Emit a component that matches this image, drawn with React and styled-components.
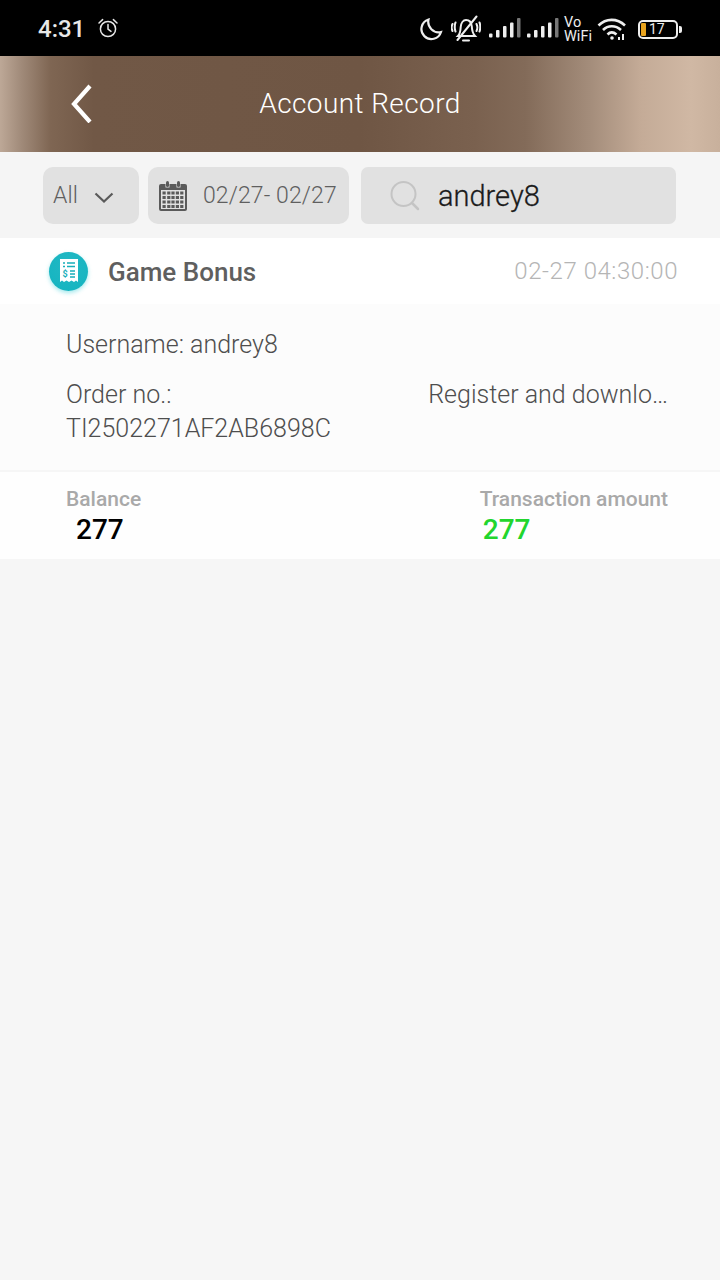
import React from 'react';
import styled, { createGlobalStyle } from 'styled-components';

const Global = createGlobalStyle`
  html, body { margin: 0; padding: 0; background: #f6f6f6; }
  body { font-family: Roboto, "Liberation Sans", sans-serif; }
`;
const Page = styled.div`
  width: 720px; height: 1280px; background: #f6f6f6; overflow: hidden;
  display: flex; flex-direction: column;
`;
const StatusBar = styled.div`
  height: 56px; flex: none; background: #000; color: #eee;
  display: flex; align-items: center; justify-content: space-between;
  padding: 2px 42px 0 38px; box-sizing: border-box;
`;
const StatusGroup = styled.div`
  display: flex; align-items: center; gap: ${p => p.$gap || 0}px;
`;
const Clock = styled.span`
  font-size: 24px; font-weight: 500; line-height: 28px; color: #e8e8e8;
`;
const StatusIcon = styled.svg`
  flex: none; margin-right: ${p => p.$mr || 0}px; margin-top: ${p => p.$mt || 0}px;
`;
const VoWifi = styled.div`
  font-weight: 400; color: #eee; margin: 1px 5px 0 0; width: 28px;
  font-size: 14.5px; line-height: 14px; text-align: left;
`;
const Battery = styled.div`
  width: 40px; height: 19px; border: 2px solid #eee; border-radius: 5px; box-sizing: border-box;
  display: flex; align-items: center; padding: 0 1px; gap: 3px; position: relative;
  &::after {
    content: ""; position: absolute; right: -6px; top: 4px; width: 3px; height: 7px; background: #eee; border-radius: 0 2px 2px 0;
  }
`;
const BatteryFill = styled.span`
  width: 5px; height: 13px; background: #e8a31e; border-radius: 1px; flex: none;
`;
const BatteryText = styled.span`
  font-size: 14px; line-height: 15px; font-weight: 400; color: #eee;
`;
const Header = styled.header`
  height: 96px; flex: none; position: relative;
  background: linear-gradient(90deg, #bda897 0%, #a08a79 3%, #7f6653 7%, #715846 13%, #6f5644 50%, #7a614f 66%, #836b59 73%, #a48d7b 82%, #c4ab97 89%, #d0b8a4 96%, #c8b09c 100%);
  display: flex; align-items: center; justify-content: center;
`;
const BackButton = styled.span`
  position: absolute; left: 68px; top: 27px; width: 28px; height: 40px; display: block;
`;
const Title = styled.h1`
  margin: 0; font-size: 28px; font-weight: 300; color: #fff; line-height: 40px; letter-spacing: 0.4px;
`;
const Filters = styled.div`
  height: 86px; flex: none; background: #f5f5f5; display: flex; gap: 9px;
  padding: 15px 44px 14px 43px; box-sizing: border-box;
`;
const Chip = styled.div`
  background: #e1e1e1; border-radius: ${p => p.$radius || 10}px; height: 57px; box-sizing: border-box;
  display: flex; align-items: center; flex: ${p => p.$grow ? '1' : 'none'};
  width: ${p => p.$width ? `${p.$width}px` : 'auto'};
  padding-left: ${p => p.$pad}px; gap: ${p => p.$gap}px; margin-left: ${p => p.$ml || 0}px;
`;
const ChipText = styled.span`
  font-size: 23px; font-weight: 300; color: #5f5f5f; letter-spacing: 0.1px; line-height: 30px;
`;
const SearchText = styled.span`
  font-size: 29px; color: #1b1b1b; line-height: 32px; font-weight: 300; -webkit-text-stroke: 0.3px #1b1b1b;
`;
const CardHead = styled.div`
  height: 66px; flex: none; background: #fff; display: flex; align-items: center; justify-content: space-between;
  padding: 0 42px 0 49px; box-sizing: border-box;
`;
const CardHeadLeft = styled.div`
  display: flex; align-items: center; gap: 20px;
`;
const Badge = styled.span`
  width: 39px; height: 39px; border-radius: 50%; display: flex; align-items: center; justify-content: center;
  background: radial-gradient(circle at 50% 35%, #22b8c4, #12b4c0);
  box-shadow: 0 2px 4px rgba(30, 200, 210, 0.4);
`;
const CardTitle = styled.span`
  font-size: 26px; font-weight: 500; color: #5f5f5f; line-height: 30px; margin-top: 2px;
`;
const CardTime = styled.span`
  font-size: 24px; font-weight: 300; color: #b5b5b5; letter-spacing: 0.55px; line-height: 30px; margin-top: -1px;
`;
const CardBody = styled.div`
  flex: none; height: 166px; background: #fcfcfc; padding: 24px 52px 0 66px; box-sizing: border-box;
  display: flex; flex-direction: column;
`;
const BodyLine = styled.div`
  font-size: 25px; font-weight: 300; color: #4e4e4e; line-height: 34px; height: 34px; white-space: nowrap;
`;
const OrderRow = styled.div`
  display: flex; justify-content: space-between; margin-top: 16px;
`;
const Divider = styled.div`
  height: 2px; flex: none; background: #f6f6f6;
`;
const Summary = styled.div`
  flex: none; height: 87px; background: #fefefe; display: flex; justify-content: space-between;
  padding: 15px 52px 0 66px; box-sizing: border-box;
`;
const Stat = styled.div`
  display: flex; flex-direction: column;
`;
const StatLabel = styled.span`
  font-size: 21px; font-weight: 500; color: #a9a9a9; line-height: 24px; white-space: nowrap;
`;
const StatValue = styled.span`
  font-size: 28px; font-weight: 500; color: ${p => p.$color}; line-height: 32px; padding-left: ${p => p.$indent}px; margin-top: 3px;
`;

const Calendar = () => (
  <svg width="28" height="30" viewBox="0 0 28 30">
    <path fill="#5a5a5a" d="M2 3h4.500v3.500h4V3h7v3.500h4V3H26a2 2 0 0 1 2 2v23a2 2 0 0 1-2 2H2a2 2 0 0 1-2-2V5a2 2 0 0 1 2-2z" />
    <rect x="7" y="0" width="3" height="6" rx="1.500" fill="#5a5a5a" />
    <rect x="18" y="0" width="3" height="6" rx="1.500" fill="#5a5a5a" />
    <rect x="2" y="9" width="24" height="19" fill="#e1e1e1" />
    {[10.5, 15, 19.5, 24].map(y =>
      [3.5, 8.2, 12.4, 16.8, 21.2].map(x => <rect key={`${x}-${y}`} x={x} y={y} width="3.2" height="3" fill="#5a5a5a" />)
    )}
  </svg>
);

const Signal = ({ mr }) => (
  <StatusIcon $mr={mr} width="32" height="22" viewBox="0 0 32 22">
    <rect x="0" y="15.500" width="3.500" height="4" rx="1" fill="#eee" />
    <rect x="7" y="12" width="3.500" height="7.500" rx="1" fill="#eee" />
    <rect x="14" y="8" width="3.500" height="11.500" rx="1" fill="#eee" />
    <rect x="21" y="4.500" width="3.500" height="15" rx="1" fill="#eee" />
    <rect x="28" y="0" width="3.500" height="19.500" rx="1" fill="#777" />
  </StatusIcon>
);

export default function App() {
  return (
    <Page>
      <Global />
      <StatusBar>
        <StatusGroup $gap={12}>
          <Clock>4:31</Clock>
          <StatusIcon $mt={-3} width="22" height="22" viewBox="0 0 22 22" fill="none" stroke="#e6e6e6" strokeWidth="1.500" strokeLinecap="round">
            <circle cx="11" cy="12" r="7.600" />
            <path d="M11 7.500V12.200l3 2.200M2 6l3.600-3.400M20 6l-3.600-3.400" />
          </StatusIcon>
        </StatusGroup>
        <StatusGroup>
          <StatusIcon $mr={8} width="24" height="24" viewBox="0 0 24 24" fill="none" stroke="#eee" strokeWidth="2.200">
            <path d="M9.500 2.500A10 10 0 1 0 22 15 A 10.500 10.500 0 0 1 9.500 2.500z" />
          </StatusIcon>
          <StatusIcon $mr={8} width="30" height="28" viewBox="0 0 30 28" fill="none" stroke="#eee" strokeWidth="2" strokeLinecap="round">
            <path d="M7 21c2-2 2.500-5 2.700-9 .3-4 2.500-7 5.300-7 3.500 0 5.500 3 5.800 6.500.2 3.500.8 7 3.200 9.500z" />
            <path d="M12 25.500h6M25.500 1.500 6.500 25M1.500 9c-1 2-1 5 0 7M4.500 7.500c-1 2-1 7 0 9M25.500 9c1 2 1 5 0 7M28.500 7.500c1 2 1 7 0 9" />
          </StatusIcon>
          <Signal mr={6} />
          <Signal mr={5} />
          <VoWifi>Vo WiFi</VoWifi>
          <StatusIcon $mr={11} width="30" height="24" viewBox="0 0 30 24" fill="none" stroke="#eee" strokeWidth="2.600">
            <path d="M1.500 8.500C9 1 20 1 28 8.500M6 13c5-5 12.500-5 18 0M10.500 17.500c2.500-2.500 6-2.500 9 0" />
            <circle cx="15" cy="21" r="1.800" fill="#eee" stroke="none" />
            <path d="M22 23v-3M26 23v-6" strokeWidth="2" />
          </StatusIcon>
          <Battery>
            <BatteryFill />
            <BatteryText>17</BatteryText>
          </Battery>
        </StatusGroup>
      </StatusBar>
      <Header>
        <BackButton>
          <svg width="28" height="40" viewBox="0 0 28 40" fill="none" stroke="#fff" strokeWidth="4.200">
            <path d="M22 3 6 21l16 18" />
          </svg>
        </BackButton>
        <Title>Account Record</Title>
      </Header>
      <Filters>
        <Chip $width={96} $pad={10} $gap={16}>
          <ChipText>All</ChipText>
          <svg width="20" height="12" viewBox="0 0 20 12" fill="none" stroke="#5a5a5a" strokeWidth="2.200" style={{ marginTop: 4 }}>
            <path d="M1.500 1.500 10 9.500l8.500-8" />
          </svg>
        </Chip>
        <Chip $width={201} $pad={11} $gap={16}>
          <Calendar />
          <ChipText>02/27- 02/27</ChipText>
        </Chip>
        <Chip $grow $pad={29} $gap={18} $ml={3} $radius={7}>
          <svg width="30" height="30" viewBox="0 0 30 30" fill="none" stroke="#c4c4c4" strokeWidth="2">
            <circle cx="13.500" cy="13" r="12" />
            <path d="m22 22 6 6" strokeWidth="2.500" strokeLinecap="round" />
          </svg>
          <SearchText>andrey8</SearchText>
        </Chip>
      </Filters>
      <CardHead>
        <CardHeadLeft>
          <Badge>
            <svg width="20" height="26" viewBox="0 0 20 26">
              <path fill="#fff" d="M1 1h18v23l-2-1.500-2 1.500-2.500-1.500L10 24l-2.500-1.500L5 24l-2-1.500L1 24z" />
              <path d="M4 5h2M8 5h8M4 8.500h2M8 8.500h8M11 13h5M11 16h5M11 19h5" stroke="#19aeba" strokeWidth="1.500" />
              <text x="3.500" y="19" fontSize="9" fontWeight="700" fill="#19aeba" fontFamily="Roboto, sans-serif">$</text>
            </svg>
          </Badge>
          <CardTitle>Game Bonus</CardTitle>
        </CardHeadLeft>
        <CardTime>02-27 04:30:00</CardTime>
      </CardHead>
      <CardBody>
        <BodyLine>Username: andrey8</BodyLine>
        <OrderRow>
          <BodyLine>Order no.:</BodyLine>
          <BodyLine>Register and downlo…</BodyLine>
        </OrderRow>
        <BodyLine>TI2502271AF2AB6898C</BodyLine>
      </CardBody>
      <Divider />
      <Summary>
        <Stat>
          <StatLabel>Balance</StatLabel>
          <StatValue $color="#000" $indent={10}>277</StatValue>
        </Stat>
        <Stat>
          <StatLabel>Transaction amount</StatLabel>
          <StatValue $color="#22d52e" $indent={3}>277</StatValue>
        </Stat>
      </Summary>
    </Page>
  );
}
